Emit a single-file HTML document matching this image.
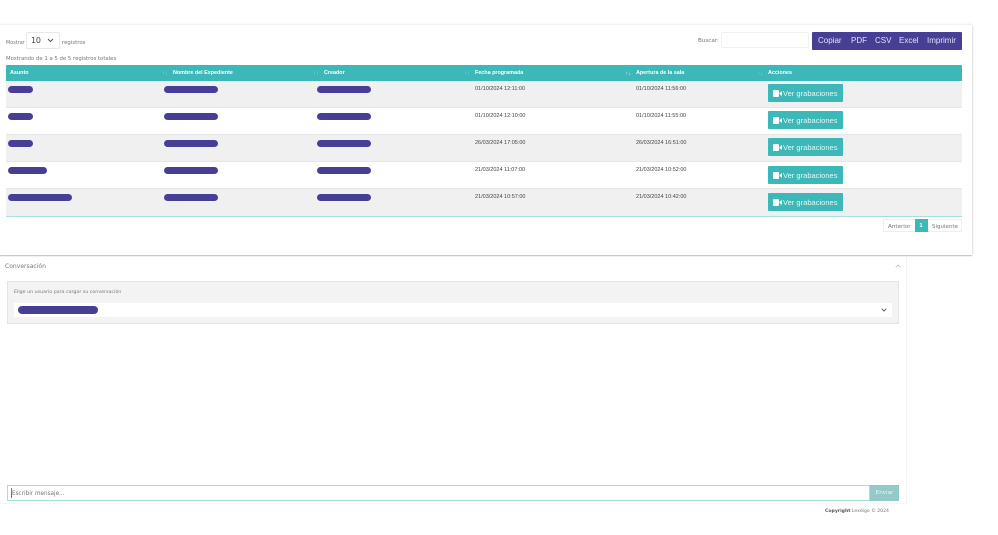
<!DOCTYPE html>
<html lang="es">
<head>
<meta charset="utf-8">
<title>Grabaciones</title>
<style>
html,body{margin:0;padding:0;background:#fff;}
body{width:998px;height:535px;overflow:hidden;position:relative;font-family:"DejaVu Sans","Liberation Sans",sans-serif;color:#777;}
#w{left:0;top:0;width:998px;height:535px;filter:blur(.3px);}
div,span{position:absolute;white-space:nowrap;box-sizing:border-box;}
.t{line-height:10px;}
.pill{background:#473f95;border-radius:4px;height:7px;}
.row{left:6px;width:956px;height:27px;border-bottom:1px solid #e6e6e6;}
.g{background:#f0f0f0;}
.th{color:#fff;font:bold 5.4px/10px "Liberation Sans",sans-serif;top:67.5px;}
.so{color:#8fd2cf;font:6px/10px "Liberation Sans",sans-serif;top:69px;}
.d{color:#444;font:5.5px/10px "Liberation Sans",sans-serif;}
.btn{left:768px;width:75px;height:18px;background:#3bb8b7;border-radius:1px;color:#e6f7f6;font:7.5px/19px "Liberation Sans",sans-serif;padding-left:15px;letter-spacing:.02px;}
.btn svg{position:absolute;left:5px;top:5.5px;}
.top{color:#e3e1f1;font:8px/18px "Liberation Sans",sans-serif;top:32px;}
</style>
</head>
<body>
<div id="w">
<div style="left:0;top:25px;width:972px;height:230px;background:#fff;box-shadow:0 1px 1px #bdbdbd,1px 0 2px #e8e8e8,0 -1px 2px #f2f2f2;"></div>

<div class="t" style="left:6px;top:37.500px;font-size:4.900px;">Mostrar</div>
<div style="left:26px;top:32px;width:34px;height:17px;border:1px solid #e8e8e8;border-radius:2px;background:#fff;"></div>
<div class="t" style="left:31px;top:36px;font-size:8px;color:#444;letter-spacing:-.2px;">10</div>
<svg style="position:absolute;left:47px;top:38px;" width="7" height="5" viewBox="0 0 7 5"><path d="M1 1l2.500 2.500L6 1" fill="none" stroke="#555" stroke-width="1"/></svg>
<div class="t" style="left:62px;top:37.500px;font-size:5.400px;">registros</div>
<div class="t" style="left:6px;top:53.500px;font-size:5.350px;">Mostrando de 1 a 5 de 5 registros totales</div>

<div class="t" style="left:698px;top:36px;font-size:5.600px;">Buscar:</div>
<div style="left:721px;top:32px;width:88px;height:16px;background:#fff;border:1px solid #f1f1f1;border-radius:2px;"></div>
<div style="left:812px;top:32px;width:150px;height:18px;background:#473f95;border-radius:1px;"></div>
<div class="top" style="left:818px;">Copiar</div>
<div class="top" style="left:851px;">PDF</div>
<div class="top" style="left:875px;">CSV</div>
<div class="top" style="left:899px;">Excel</div>
<div class="top" style="left:927px;">Imprimir</div>

<div style="left:6px;top:65px;width:956px;height:15.5px;background:#3bb8b7;border-radius:1px 1px 0 0;"></div>
<div class="th" style="left:10px;">Asunto</div>
<div class="so" style="left:162px;">↑↓</div>
<div class="th" style="left:173px;">Nombre del Expediente</div>
<div class="so" style="left:313px;">↑↓</div>
<div class="th" style="left:324px;">Creador</div>
<div class="so" style="left:464px;">↑↓</div>
<div class="th" style="left:475px;">Fecha programada</div>
<div class="so" style="left:625px;color:#d9f2f1;">↑↓</div>
<div class="th" style="left:636px;">Apertura de la sala</div>
<div class="so" style="left:757px;">↑↓</div>
<div class="th" style="left:768px;">Acciones</div>

<div class="row g" style="top:81px;"></div>
<div class="row" style="top:108px;"></div>
<div class="row g" style="top:135px;"></div>
<div class="row" style="top:162px;"></div>
<div class="row g" style="top:189px;height:27px;border-bottom:0;"></div>
<div style="left:6px;top:216px;width:956px;height:1px;background:#a6e0de;"></div>

<div class="pill" style="left:8px;top:86px;width:25px;"></div>
<div class="pill" style="left:164px;top:86px;width:54px;"></div>
<div class="pill" style="left:317px;top:86px;width:54px;"></div>
<div class="d" style="left:475px;top:84px;">01/10/2024 12:11:00</div>
<div class="d" style="left:636px;top:84px;">01/10/2024 11:56:00</div>
<div class="btn" style="top:84px;"><svg width="9" height="7" viewBox="0 0 9 7"><rect x="0" y="0" width="6" height="7" rx="1" fill="#fff"/><path d="M6.500 3L9 1v5L6.500 4z" fill="#fff"/></svg>Ver grabaciones</div>

<div class="pill" style="left:8px;top:113px;width:25px;"></div>
<div class="pill" style="left:164px;top:113px;width:54px;"></div>
<div class="pill" style="left:317px;top:113px;width:54px;"></div>
<div class="d" style="left:475px;top:111px;">01/10/2024 12:10:00</div>
<div class="d" style="left:636px;top:111px;">01/10/2024 11:55:00</div>
<div class="btn" style="top:111px;"><svg width="9" height="7" viewBox="0 0 9 7"><rect x="0" y="0" width="6" height="7" rx="1" fill="#fff"/><path d="M6.500 3L9 1v5L6.500 4z" fill="#fff"/></svg>Ver grabaciones</div>

<div class="pill" style="left:8px;top:140px;width:25px;"></div>
<div class="pill" style="left:164px;top:140px;width:54px;"></div>
<div class="pill" style="left:317px;top:140px;width:54px;"></div>
<div class="d" style="left:475px;top:138px;">26/03/2024 17:05:00</div>
<div class="d" style="left:636px;top:138px;">26/03/2024 16:51:00</div>
<div class="btn" style="top:138px;"><svg width="9" height="7" viewBox="0 0 9 7"><rect x="0" y="0" width="6" height="7" rx="1" fill="#fff"/><path d="M6.500 3L9 1v5L6.500 4z" fill="#fff"/></svg>Ver grabaciones</div>

<div class="pill" style="left:8px;top:167px;width:39px;"></div>
<div class="pill" style="left:164px;top:167px;width:54px;"></div>
<div class="pill" style="left:317px;top:167px;width:54px;"></div>
<div class="d" style="left:475px;top:165px;">21/03/2024 11:07:00</div>
<div class="d" style="left:636px;top:165px;">21/03/2024 10:52:00</div>
<div class="btn" style="top:166px;"><svg width="9" height="7" viewBox="0 0 9 7"><rect x="0" y="0" width="6" height="7" rx="1" fill="#fff"/><path d="M6.500 3L9 1v5L6.500 4z" fill="#fff"/></svg>Ver grabaciones</div>

<div class="pill" style="left:8px;top:194px;width:64px;"></div>
<div class="pill" style="left:164px;top:194px;width:54px;"></div>
<div class="pill" style="left:317px;top:194px;width:54px;"></div>
<div class="d" style="left:475px;top:192px;">21/03/2024 10:57:00</div>
<div class="d" style="left:636px;top:192px;">21/03/2024 10:42:00</div>
<div class="btn" style="top:193px;"><svg width="9" height="7" viewBox="0 0 9 7"><rect x="0" y="0" width="6" height="7" rx="1" fill="#fff"/><path d="M6.500 3L9 1v5L6.500 4z" fill="#fff"/></svg>Ver grabaciones</div>

<div style="left:883px;top:219px;width:79px;height:13px;border:1px solid #eee;background:#fff;"></div>
<div class="t" style="left:888px;top:221.500px;font-size:5.600px;">Anterior</div>
<div style="left:914.500px;top:219px;width:13px;height:13px;background:#3bb8b7;color:#fff;font:bold 5.800px/14px 'Liberation Sans',sans-serif;text-align:center;">1</div>
<div class="t" style="left:932px;top:221.500px;font-size:5.500px;">Siguiente</div>

<div style="left:0;top:256px;width:907px;height:248px;border-right:1px solid #f3f3f3;border-bottom:1px solid #f6f6f6;"></div>
<div class="t" style="left:5px;top:262px;font-size:6.050px;">Conversación</div>
<svg style="position:absolute;left:895px;top:264px;" width="6" height="4" viewBox="0 0 6 4"><path d="M.7 3.300L3 1l2.300 2.300" fill="none" stroke="#bbb" stroke-width=".8"/></svg>

<div style="left:7px;top:281px;width:892px;height:43px;background:#f3f3f3;border:1px solid #e4e4e4;"></div>
<div class="t" style="left:14px;top:288px;font-size:4.750px;">Elige un usuario para cargar su conversación</div>
<div style="left:14px;top:302.500px;width:878px;height:14.500px;background:#fff;"></div>
<div class="pill" style="left:18px;top:306px;width:80px;height:7.500px;"></div>
<svg style="position:absolute;left:881px;top:308px;" width="6" height="4" viewBox="0 0 6 4"><path d="M.7.700L3 3l2.300-2.300" fill="none" stroke="#555" stroke-width=".9"/></svg>

<div style="left:7px;top:485px;width:863px;height:16px;background:#fff;border:1px solid #a6dedb;"></div>
<div style="left:11px;top:488px;width:1px;height:10px;background:#777;"></div>
<div class="t" style="left:12px;top:488.500px;font-size:5.700px;">Escribir mensaje...</div>
<div style="left:870px;top:485px;width:29px;height:16px;background:#93c9c7;color:#eaf6f5;font-size:5.600px;line-height:16px;text-align:center;">Enviar</div>

<div class="t" style="left:825px;top:506.500px;font-size:4.600px;"><b style="color:#555;">Copyright</b> Lexdigo © 2024</div>
</div>
</body>
</html>
